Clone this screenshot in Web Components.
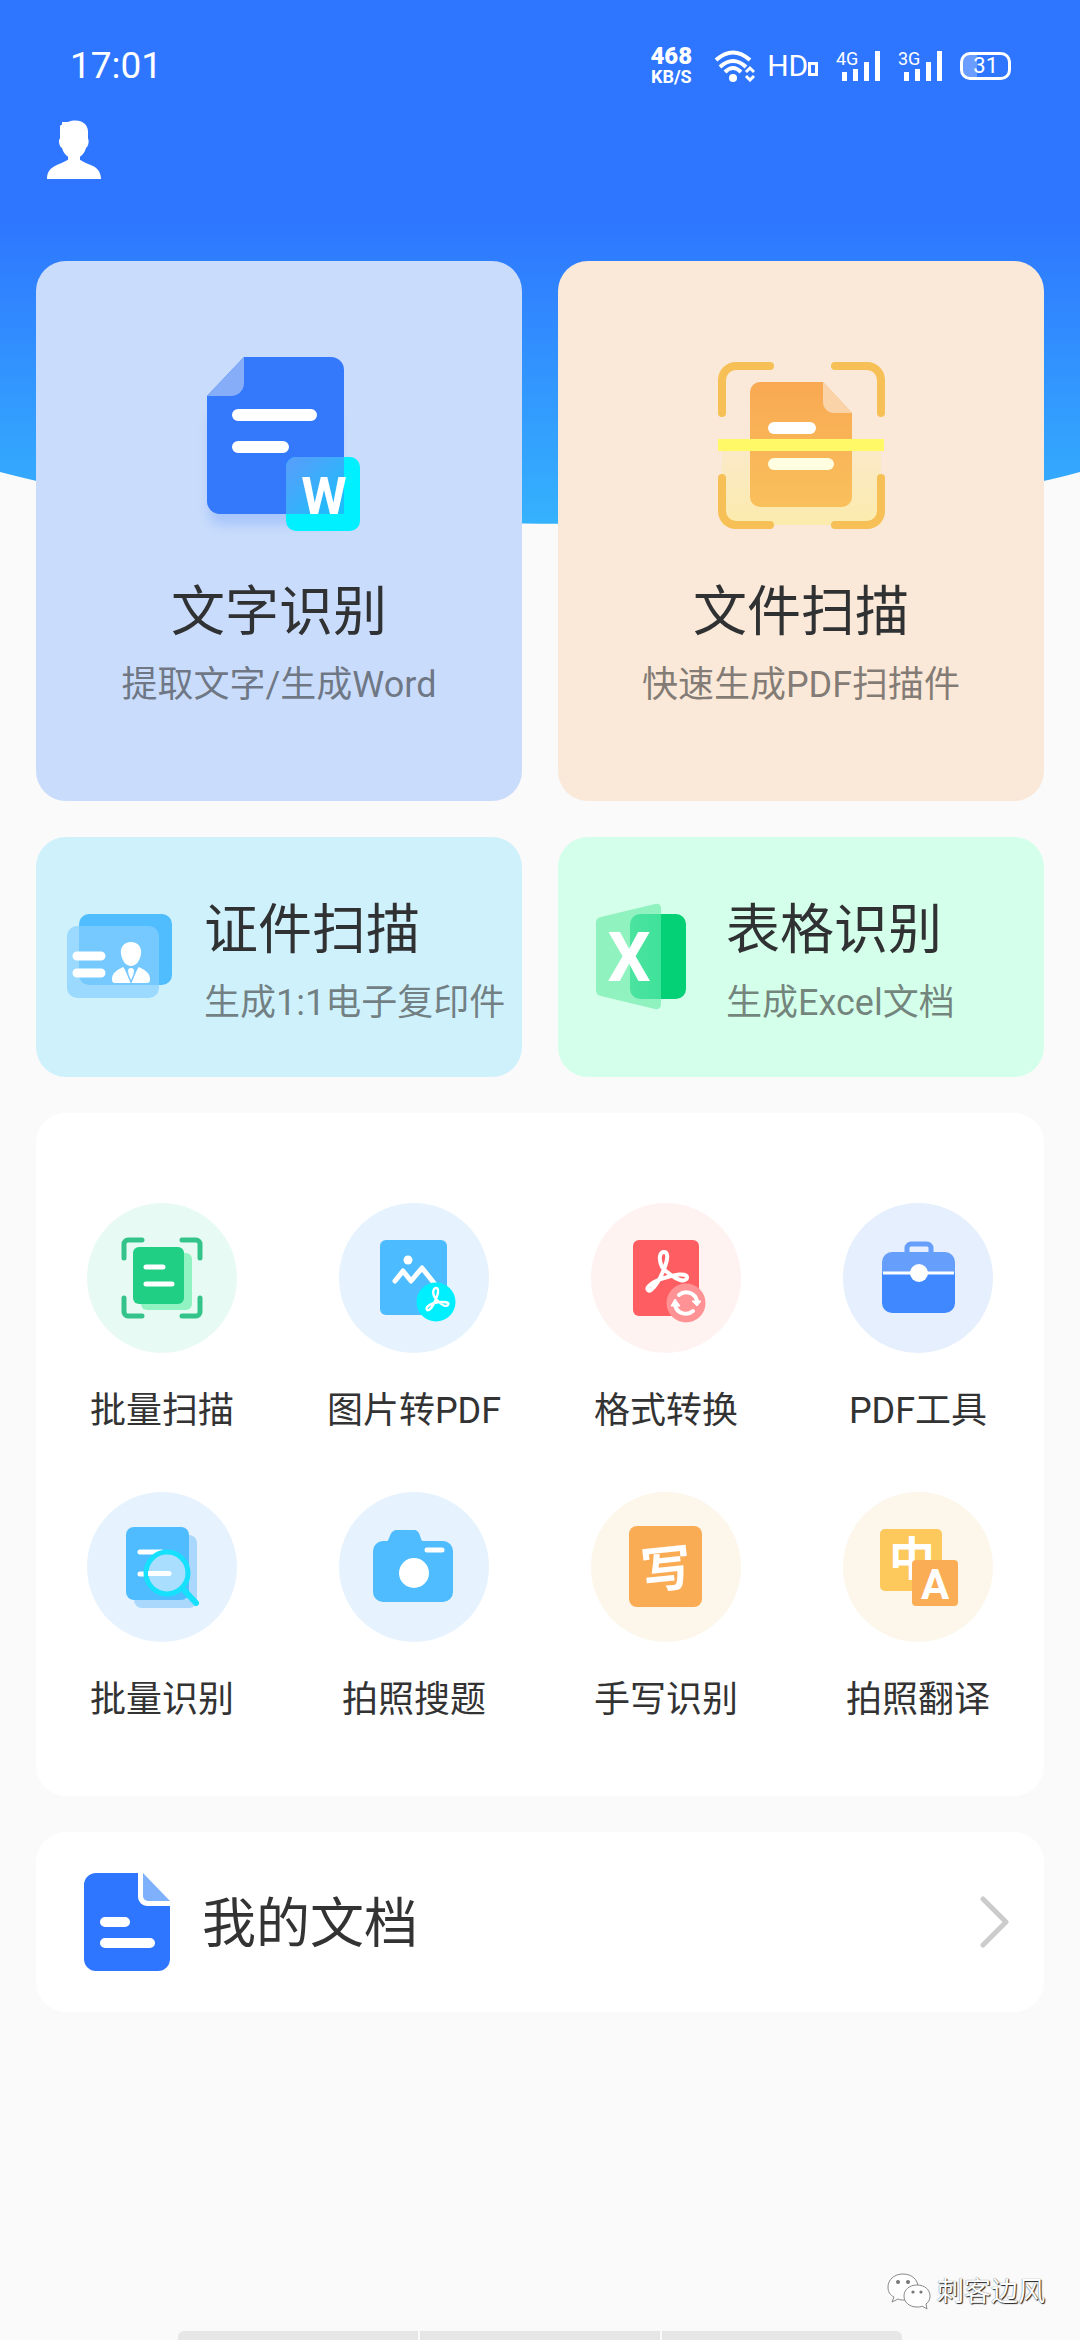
<!DOCTYPE html>
<html lang="zh-CN">
  <head>
    <meta charset="utf-8" />
    <meta name="viewport" content="width=device-width, initial-scale=1" />
    <title>文字识别</title>
    <style>
      body {
        margin: 0;
        background: #fafafa;
        color: #333;
        font-family: Roboto, "Noto Sans CJK SC", sans-serif;
      }
      svg {
        display: block;
      }
    </style>
  </head>
  <body>
    <script type="text/javascript">
      // small helper: a custom element is its shadow markup and nothing more
      function define(name, html) {
        const template = document.createElement("template");
        template.innerHTML = html;
        window.customElements.define(
          name,
          class extends HTMLElement {
            constructor() {
              super();
              this.attachShadow({ mode: "open" });
              this.shadowRoot.appendChild(template.content.cloneNode(true));
            }
          }
        );
      }

      // page frame, the hero shape shares a grid cell with the content
      define(
        "app-page",
        `
        <style>
          :host {
            display: grid;
            grid-template-columns: minmax(0, 1fr);
            min-height: 100vh;
          }
          .hero, .content {
            grid-area: 1 / 1;
          }
          .hero {
            width: 100%;
            height: 524px;
          }
          .content {
            display: flex;
            flex-direction: column;
          }
          main {
            display: flex;
            flex-direction: column;
            gap: 36px;
            padding: 0 36px;
          }
        </style>
        <svg class="hero" viewBox="0 0 1080 524" preserveAspectRatio="none" aria-hidden="true">
          <defs>
            <linearGradient id="sky" x1="0" y1="220" x2="0" y2="524" gradientUnits="userSpaceOnUse">
              <stop offset="0" stop-color="#2e76ff" />
              <stop offset="1" stop-color="#35b2fd" />
            </linearGradient>
          </defs>
          <path d="M0 0H1080V472C825 541 255 541 0 472Z" fill="url(#sky)" />
        </svg>
        <div class="content">
          <slot name="top"></slot>
          <main><slot></slot></main>
          <slot name="bottom"></slot>
        </div>
        `
      );

      define(
        "status-bar",
        `
        <style>
          :host {
            display: flex;
            align-items: center;
            gap: 18px;
            height: 92px;
            padding: 20px 69px 0 70px;
            color: #fff;
          }
          .time {
            margin-right: auto;
            font-size: 37px;
            line-height: 44px;
          }
          .speed {
            display: grid;
            margin-right: 4px;
            text-align: center;
            font-weight: 700;
            font-size: 18px;
            line-height: 20px;
          }
          .speed b {
            font-size: 24px;
            line-height: 22px;
          }
          .net {
            display: flex;
            align-items: center;
            gap: 12px;
          }
          .hd {
            display: flex;
            align-items: baseline;
            font-size: 30px;
            line-height: 32px;
          }
          .hd i {
            width: 4px;
            height: 8px;
            border: 3px solid;
          }
          .battery {
            font-size: 22px;
            line-height: 22px;
            padding: 0 10px;
            border: 3px solid;
            border-radius: 10px;
            background: linear-gradient(90deg, #6a9dff 31%, transparent 31%);
          }
          svg {
            display: block;
            fill: currentColor;
          }
          svg text {
            font-size: 18px;
          }
        </style>
        <span class="time">17:01</span>
        <span class="speed"><b>468</b><span>KB/S</span></span>
        <span class="net">
          <svg width="41" height="32" viewBox="0 0 41 32">
            <g fill="none" stroke="currentColor" stroke-width="4">
              <path d="M2 10Q19 -5 36 10" />
              <path d="M6 17Q19 5 32 17" />
              <path d="M11 22Q19 14 27 22" />
              <path d="M32 22l4-4 4 4M32 26l4 4 4-4" stroke-width="3" />
            </g>
            <circle cx="19" cy="28" r="4" />
          </svg>
          <span class="hd">HD<i></i></span>
        </span>
        <svg width="44" height="44" viewBox="0 -6 44 44">
          <text x="0" y="15">4G</text>
          <path d="M6 22h5v9h-5zM17 19h5v12h-5zM28 12h5v19h-5zM39 1h5v30h-5z" />
        </svg>
        <svg width="44" height="44" viewBox="0 -6 44 44">
          <text x="0" y="15">3G</text>
          <path d="M6 22h5v9h-5zM17 19h5v12h-5zM28 12h5v19h-5zM39 1h5v30h-5z" />
        </svg>
        <span class="battery">31</span>
        `
      );

      define(
        "app-header",
        `
        <style>
          :host {
            display: flex;
            align-items: center;
            height: 76px;
            padding: 0 47px 73px;
          }
          button {
            padding: 0;
            border: 0;
            background: none;
          }
        </style>
        <button aria-label="个人中心"><slot></slot></button>
        `
      );

      define(
        "card-grid",
        `
        <style>
          :host {
            display: grid;
            grid-template-columns: repeat(2, minmax(0, 1fr));
            gap: 36px;
          }
        </style>
        <slot></slot>
        `
      );

      define(
        "feature-card",
        `
        <style>
          :host {
            display: block;
          }
          a {
            display: flex;
            align-items: center;
            box-sizing: border-box;
            height: 240px;
            border-radius: 30px;
            background: var(--card);
            color: #2f3133;
            text-decoration: none;
            white-space: nowrap;
          }
          .icon {
            display: flex;
            flex: none;
            justify-content: center;
            width: 168px;
          }
          .text {
            display: grid;
            gap: 6px;
            padding-top: 6px;
          }
          .title {
            font-size: 54px;
            line-height: 80px;
          }
          .note {
            color: rgba(51, 51, 51, 0.6);
            font-size: 36px;
            line-height: 52px;
          }
          :host([large]) a {
            flex-direction: column;
            justify-content: center;
            gap: 26px;
            height: 540px;
            text-align: center;
          }
          :host([large]) .icon {
            width: auto;
          }
        </style>
        <a href="#">
          <span class="icon"><slot name="icon"></slot></span>
          <span class="text">
            <span class="title"><slot></slot></span>
            <span class="note"><slot name="note"></slot></span>
          </span>
        </a>
        `
      );

      define(
        "tool-panel",
        `
        <style>
          :host {
            display: grid;
            grid-template-columns: repeat(4, minmax(0, 1fr));
            row-gap: 55px;
            padding: 90px 0 70px;
            border-radius: 30px;
            background: #fff;
          }
        </style>
        <slot></slot>
        `
      );

      define(
        "tool-item",
        `
        <style>
          :host {
            display: block;
          }
          a {
            display: flex;
            flex-direction: column;
            align-items: center;
            gap: 32px;
            color: #333;
            font-size: 36px;
            line-height: 52px;
            text-decoration: none;
            white-space: nowrap;
          }
          .disc {
            width: 150px;
            height: 150px;
            border-radius: 50%;
            background: var(--disc);
          }
        </style>
        <a href="#">
          <span class="disc"><slot name="icon"></slot></span>
          <slot></slot>
        </a>
        `
      );

      define(
        "list-link",
        `
        <style>
          :host {
            display: block;
          }
          a {
            display: flex;
            align-items: center;
            gap: 32px;
            height: 180px;
            padding: 0 35px 0 48px;
            border-radius: 30px;
            background: #fff;
            color: #333;
            font-size: 54px;
            line-height: 80px;
            text-decoration: none;
          }
          .label {
            padding-top: 6px;
          }
          .arrow {
            margin-left: auto;
          }
        </style>
        <a href="#">
          <slot name="icon"></slot>
          <span class="label"><slot></slot></span>
          <svg class="arrow" width="29" height="52" viewBox="0 0 29 52" fill="none" stroke="#ccc" stroke-width="5" stroke-linecap="round" stroke-linejoin="round">
            <path d="M3 3l23 23L3 49" />
          </svg>
        </a>
        `
      );

      define(
        "page-mark",
        `
        <style>
          :host {
            display: flex;
            align-items: center;
            justify-content: flex-end;
            gap: 6px;
            margin-top: auto;
            padding: 36px 35px 19px;
            color: #fff;
            font-size: 27px;
            line-height: 40px;
            text-shadow: 1px 1px 1px #222, 0 0 1px #555;
          }
        </style>
        <svg width="44" height="38" viewBox="0 0 44 38" fill="#fff" stroke="#888" stroke-width="1">
          <path d="M16 1C7 1 1 7 1 14c0 5 2 8 6 10l-2 5 6-3c2 1 4 1 6 1 8 0 14-6 14-13S25 1 16 1z" />
          <path d="M30 12c-8 0-13 5-13 11s5 11 13 11c2 0 4 0 5-1l5 3-1-5c3-2 4-5 4-8 0-6-5-11-13-11z" />
          <g fill="#777" stroke="none">
            <circle cx="11" cy="9" r="2" />
            <circle cx="21" cy="9" r="2" />
            <circle cx="26" cy="19" r="1.6" />
            <circle cx="34" cy="19" r="1.6" />
          </g>
        </svg>
        <span><slot></slot></span>
        `
      );

      define(
        "gesture-bar",
        `
        <style>
          :host {
            display: grid;
            grid-template-columns: repeat(3, 1fr);
            gap: 2px;
            width: 67%;
            height: 9px;
            margin: 0 auto;
            border-radius: 6px 6px 0 0;
            overflow: hidden;
          }
          span {
            background: #e6e6e6;
          }
        </style>
        <span></span><span></span><span></span>
        `
      );
    </script>

    <app-page>
      <status-bar slot="top"></status-bar>
      <app-header slot="top">
        <svg width="54" height="60" viewBox="0 0 54 62" preserveAspectRatio="none" fill="#fff">
          <path d="M15 2h6C31-2 41 2 41 12v7c1 1 1 8-2 10-1 4-3 7-6 9v3c4 3 10 5 14 7 5 3 7 8 7 13H0c0-6 2-10 7-13 4-3 10-4 14-7v-3c-3-2-5-5-6-9-3-2-4-9-2-10V8c0-2 0-3 2-3z" />
        </svg>
      </app-header>

      <card-grid>
        <feature-card large style="--card: #c9dcfb">
          <svg slot="icon" width="180" height="190" viewBox="0 -2 180 190">
            <defs>
              <filter id="soft" x="-20%" y="-20%" width="140%" height="140%">
                <feGaussianBlur stdDeviation="6" />
              </filter>
              <linearGradient id="word" x1="0" y1="0" x2="1" y2="1">
                <stop offset="0" stop-color="#5a9cfa" />
                <stop offset="1" stop-color="#18c0fc" />
              </linearGradient>
            </defs>
            <rect x="20" y="60" width="130" height="112" rx="12" fill="#3478fc" opacity=".22" filter="url(#soft)" />
            <path d="M55 4h87a13 13 0 0 1 13 13v131a13 13 0 0 1-13 13H31a13 13 0 0 1-13-13V43z" fill="#3478fc" />
            <path d="M55 4v26a13 13 0 0 1-13 13H18z" fill="#86adf8" />
            <path d="M49 62h73M49 94h45" stroke="#fff" stroke-width="12" stroke-linecap="round" />
            <rect x="97" y="104" width="74" height="74" rx="10" fill="#00f0ff" />
            <path d="M107 104h48v57H97v-47a10 10 0 0 1 10-10z" fill="url(#word)" />
            <text x="135" y="161" fill="#fff" font-size="52" font-weight="700" text-anchor="middle">W</text>
          </svg>
          文字识别
          <span slot="note">提取文字/生成Word</span>
        </feature-card>
        <feature-card large style="--card: #fae8d8">
          <svg slot="icon" width="180" height="190" viewBox="0 -2 180 190">
            <defs>
              <linearGradient id="paper" x1="0" y1="0" x2="0" y2="1">
                <stop offset="0" stop-color="#f9a953" />
                <stop offset="1" stop-color="#f9c05c" />
              </linearGradient>
              <linearGradient id="glow" x1="0" y1="0" x2="0" y2="1">
                <stop offset="0" stop-color="#fdf06a" stop-opacity=".15" />
                <stop offset="1" stop-color="#fdf06a" stop-opacity=".4" />
              </linearGradient>
            </defs>
            <path d="M11 98h159v74H11z" fill="url(#glow)" />
            <path d="M11 60V27a14 14 0 0 1 14-14h34M124 13h32a14 14 0 0 1 14 14v33M170 125v33a14 14 0 0 1-14 14h-32M59 172H25a14 14 0 0 1-14-14v-33" fill="none" stroke="#f6c056" stroke-width="8" stroke-linecap="round" />
            <path d="M49 29h63l29 31v84a10 10 0 0 1-10 10H49a10 10 0 0 1-10-10V39a10 10 0 0 1 10-10z" fill="url(#paper)" />
            <path d="M112 29v20a11 11 0 0 0 11 11h18z" fill="#fad3a8" />
            <path d="M63 75h36" stroke="#fff" stroke-width="12" stroke-linecap="round" />
            <path d="M63 111h54" stroke="#fffee0" stroke-width="12" stroke-linecap="round" />
            <path d="M7 92h166" stroke="#fff968" stroke-width="12" />
          </svg>
          文件扫描
          <span slot="note">快速生成PDF扫描件</span>
        </feature-card>
        <feature-card style="--card: #cff1fb">
          <svg slot="icon" width="110" height="110" viewBox="0 0 110 110">
            <rect x="14" y="12" width="93" height="71" rx="10" fill="#50bdff" />
            <rect x="2" y="24" width="92" height="72" rx="10" fill="#86cfff" opacity=".7" />
            <path d="M12 54h24M12 71h24" stroke="#fff" stroke-width="9" stroke-linecap="round" />
            <path d="M66 40c7 0 11 5 10 12s-5 12-10 12-9-5-10-12 3-12 10-12zM58 65l6 7 2-3 2 3 6-7c6 3 11 6 11 12 0 3-1 4-3 4H50c-2 0-3-1-3-4 0-6 5-9 11-12z" fill="#fff" />
            <path d="M60 66l6 14 6-14" fill="none" stroke="#74c6ff" stroke-width="1.5" />
            <circle cx="66" cy="69" r="3" fill="#fff" />
          </svg>
          证件扫描
          <span slot="note">生成1:1电子复印件</span>
        </feature-card>
        <feature-card style="--card: #d4ffea">
          <svg slot="icon" width="110" height="110" viewBox="0 0 110 110">
            <defs>
              <linearGradient id="sheet" x1="0" y1="0" x2="1" y2="0">
                <stop offset="0" stop-color="#4be3a0" />
                <stop offset="1" stop-color="#3fe29a" />
              </linearGradient>
            </defs>
            <rect x="43" y="12" width="56" height="85" rx="10" fill="#04d076" />
            <path d="M14 15L68 2q6-1 6 5v95q0 6-6 5L14 94q-5-1-5-6V21q0-5 5-6z" fill="#90f2bf" />
            <path d="M53 12h21v85H53a10 10 0 0 1-10-10V22a10 10 0 0 1 10-10z" fill="url(#sheet)" />
            <text x="42" y="79" fill="#fff" font-size="68" font-weight="700" text-anchor="middle">X</text>
          </svg>
          表格识别
          <span slot="note">生成Excel文档</span>
        </feature-card>
      </card-grid>

      <tool-panel>
        <tool-item style="--disc: #e8faf4">
          <svg slot="icon" width="150" height="150" viewBox="0 0 150 150">
            <path d="M37 55V41a4 4 0 0 1 4-4h14M95 37h14a4 4 0 0 1 4 4v14M113 95v14a4 4 0 0 1-4 4H95M55 113H41a4 4 0 0 1-4-4V95" fill="none" stroke="#34c48b" stroke-width="5" stroke-linecap="round" />
            <rect x="54" y="50" width="51" height="57" rx="6" fill="#90f3c1" />
            <rect x="46" y="44" width="51" height="57" rx="6" fill="#20ce84" />
            <path d="M59 64h17M59 81h26" stroke="#fff" stroke-width="5" stroke-linecap="round" />
          </svg>
          批量扫描
        </tool-item>
        <tool-item style="--disc: #e6f3fe">
          <svg slot="icon" width="150" height="150" viewBox="0 0 150 150">
            <rect x="41" y="37" width="67" height="75" rx="6" fill="#4dbbff" />
            <circle cx="69" cy="57" r="4.5" fill="#fff" />
            <path d="M56 78l8-10 8 10 11-13 12 15" fill="none" stroke="#fff" stroke-width="5" stroke-linecap="round" stroke-linejoin="round" />
            <circle cx="97" cy="99" r="19.5" fill="#00efff" />
            <path d="M95 93c-2-5 0-8 2-8s3 3 1 8c-2 6-5 12-8 14-2 1-3-1-2-3 3-3 10-5 16-5 5 0 6 1 5 3-2 2-6 0-9-3-2-2-4-4-5-6z" fill="none" stroke="#fff" stroke-width="2.4" stroke-linejoin="round" />
          </svg>
          图片转PDF
        </tool-item>
        <tool-item style="--disc: #fff3f2">
          <svg slot="icon" width="150" height="150" viewBox="0 0 150 150">
            <rect x="42" y="37" width="66" height="76" rx="6" fill="#fe5e62" />
            <path d="M71 64C67 55 69 49 73 49C77 49 77 55 74.5 62C71 72 65 83 60 87C57 89 55 86 58 83C63 78 76 73 88 71.5C95 71 97 73 95.5 76C93 79 86 77 80 72C76 69 73 67 71 64z" fill="none" stroke="#fff" stroke-width="4" stroke-linejoin="round" />
            <circle cx="95" cy="100" r="19.5" fill="#ff9295" />
            <path d="M88 92a11 11 0 0 1 18 6M102 108a11 11 0 0 1-18-6" fill="none" stroke="#fff" stroke-width="4" stroke-linecap="round" />
            <path d="M101 98h9l-4 5zM80 103h9l-5-7z" fill="#fff" stroke="#fff" stroke-linejoin="round" />
          </svg>
          格式转换
        </tool-item>
        <tool-item style="--disc: #e6effe">
          <svg slot="icon" width="150" height="150" viewBox="0 0 150 150">
            <path d="M64 50v-5a4 4 0 0 1 4-4h16a4 4 0 0 1 4 4v5" fill="none" stroke="#659ffb" stroke-width="5" />
            <path d="M39 70V59a10 10 0 0 1 10-10h53a10 10 0 0 1 10 10v11z" fill="#659ffb" />
            <path d="M39 70v30a10 10 0 0 0 10 10h53a10 10 0 0 0 10-10V70z" fill="#3f88ff" />
            <path d="M40 70h71" stroke="#fff" stroke-width="3" />
            <circle cx="76" cy="70" r="9" fill="#fff" />
          </svg>
          PDF工具
        </tool-item>
        <tool-item style="--disc: #e6f3fe">
          <svg slot="icon" width="150" height="150" viewBox="0 0 150 150">
            <rect x="47" y="43" width="63" height="73" rx="8" fill="#aad8fc" />
            <rect x="39" y="35" width="63" height="73" rx="8" fill="#4ebcff" />
            <path d="M53 60h22M53 82h4" stroke="#fff" stroke-width="5" stroke-linecap="round" />
            <path d="M98 99l11 12" stroke="#16e0fb" stroke-width="6" stroke-linecap="round" />
            <circle cx="80" cy="81" r="21" fill="#a9deff" stroke="#16e0fb" stroke-width="5" />
            <path d="M61 79h21a2.5 2.5 0 0 1 0 5H61z" fill="#fff" />
          </svg>
          批量识别
        </tool-item>
        <tool-item style="--disc: #e6f3fe">
          <svg slot="icon" width="150" height="150" viewBox="0 0 150 150">
            <path d="M44 49h4c3 0 2-11 10-11h17c7 0 6 11 9 11h20a10 10 0 0 1 10 10v41a10 10 0 0 1-10 10H44a10 10 0 0 1-10-10V59a10 10 0 0 1 10-10z" fill="#4ebcff" />
            <circle cx="75" cy="81" r="15" fill="#fff" />
            <path d="M88 58h15" stroke="#fff" stroke-width="5" stroke-linecap="round" />
          </svg>
          拍照搜题
        </tool-item>
        <tool-item style="--disc: #fdf6ea">
          <svg slot="icon" width="150" height="150" viewBox="0 0 150 150">
            <rect x="38" y="34" width="73" height="81" rx="8" fill="#faac55" />
            <text x="75" y="95" fill="#fff" font-size="50" font-weight="700" text-anchor="middle" transform="rotate(-6 75 75)">写</text>
          </svg>
          手写识别
        </tool-item>
        <tool-item style="--disc: #fdf6ea">
          <svg slot="icon" width="150" height="150" viewBox="0 0 150 150">
            <rect x="37" y="37" width="62" height="62" rx="5" fill="#fdc95c" />
            <text x="69" y="83" fill="#fff" font-size="46" font-weight="700" text-anchor="middle">中</text>
            <rect x="69" y="68" width="46" height="46" rx="4" fill="#fbad56" />
            <text x="92" y="107" fill="#fff" font-size="42" font-weight="700" text-anchor="middle">A</text>
          </svg>
          拍照翻译
        </tool-item>
      </tool-panel>

      <list-link>
        <svg slot="icon" width="86" height="98" viewBox="0 0 86 98">
          <path d="M12 0h42v24a9 9 0 0 0 9 9h23v53a12 12 0 0 1-12 12H12A12 12 0 0 1 0 86V12A12 12 0 0 1 12 0z" fill="#2e76ff" />
          <path d="M59 0l27 28H64a5 5 0 0 1-5-5z" fill="#7fb0fb" />
          <path d="M21 49h20M21 70h45" stroke="#fff" stroke-width="10" stroke-linecap="round" />
        </svg>
        我的文档
      </list-link>

      <page-mark slot="bottom">刺客边风</page-mark>
      <gesture-bar slot="bottom"></gesture-bar>
    </app-page>
  </body>
</html>
